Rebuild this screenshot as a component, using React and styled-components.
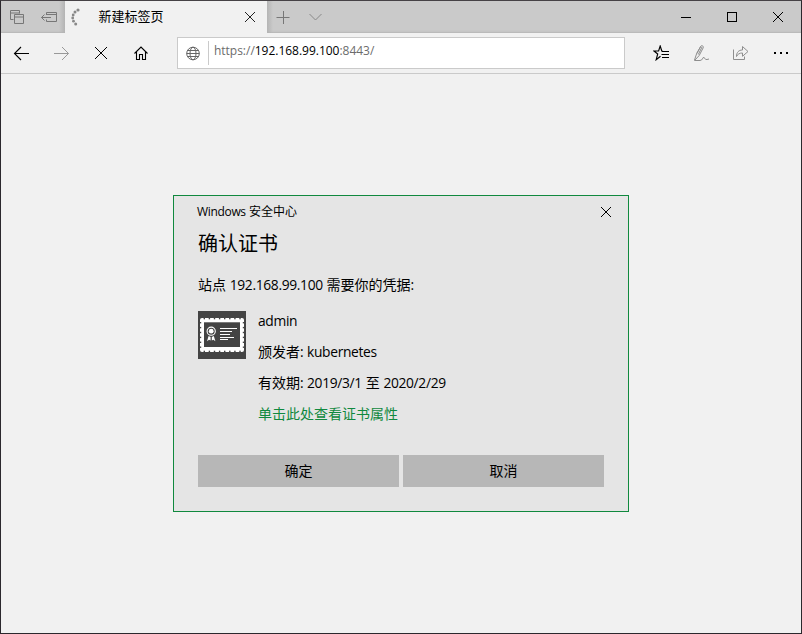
import React from "react";
import styled, { createGlobalStyle } from "styled-components";

const GlobalStyle = createGlobalStyle`
  * { box-sizing: border-box; }
  html, body { margin: 0; height: 100%; overflow: hidden; }
  body {
    font-family: "Open Sans", "Noto Sans CJK SC", sans-serif;
    color: #000;
    background: #f1f1f1;
  }
  svg { display: block; flex: none; }
`;

const Window = styled.div`
  width: 802px;
  height: 634px;
  display: flex;
  flex-direction: column;
  background: #f1f1f1;
  border: 1px solid #2b282d;
  border-top-color: #464246;
`;

const TitleBar = styled.header`
  height: 32px;
  flex: none;
  display: flex;
  background: #cacaca;
  box-shadow: inset 0 -2px 2px -1px #b5b5b5;
`;

const TabTools = styled.div`
  width: 64px;
  display: flex;
  background: linear-gradient(to right, transparent 58px, #b4b4b4);
`;

const IconButton = styled.button`
  width: ${(p) => p.$w}px;
  height: 100%;
  padding: 0;
  border: 0;
  background: none;
  display: flex;
  align-items: center;
  justify-content: center;
  flex: none;
  color: ${(p) => p.$color || "#000"};
`;

const Tab = styled.div`
  width: 202px;
  background: #f1f1f1;
  display: flex;
  align-items: center;
`;

const TabTitle = styled.span`
  width: 153px;
  padding-left: 17.5px;
  font-size: 13px;
  line-height: 30px;
  height: 32px;
`;

const TabActions = styled.div`
  flex: 1;
  display: flex;
  background: linear-gradient(to right, #b4b4b4, transparent 6px);
`;

const ToolBar = styled.nav`
  height: 41px;
  flex: none;
  display: flex;
  align-items: center;
  border-bottom: 1px solid #cacaca;
`;

const AddressBar = styled.div`
  width: 448px;
  height: 32px;
  margin: 0 16px;
  display: flex;
  align-items: center;
  background: #fff;
  border: 1px solid #cacaca;
`;

const Divider = styled.span`
  width: 1px;
  height: 24px;
  background: #cacaca;
`;

const Url = styled.span`
  padding-left: 5px;
  padding-bottom: 5px;
  font-size: 12px;
  line-height: 18px;
  letter-spacing: -0.02px;
  color: #6c6c6c;
  white-space: pre;
`;

const Host = styled.span`
  color: #000;
`;

const Page = styled.main`
  flex: 1;
  display: flex;
  align-items: center;
  justify-content: center;
`;

const Dialog = styled.section`
  width: 456px;
  height: 317px;
  border: 1px solid #10893e;
  background: #e5e5e5;
  display: flex;
  flex-direction: column;
  padding: 0 24px 24px;
`;

const DialogHeader = styled.div`
  height: 32px;
  display: flex;
  justify-content: space-between;
  margin: 0 -24px 0 -1px;
  font-size: 12px;
  line-height: 32px;
`;

const Heading = styled.h1`
  margin: 0;
  height: 30px;
  font-size: 20px;
  line-height: 31px;
  font-weight: 400;
`;

const Line = styled.p`
  margin: 0;
  height: 31px;
  font-size: 14px;
  line-height: 29px;
  white-space: pre;
`;

const Prompt = styled(Line)`
  margin: 12px 0 5px;
`;

const Latin = styled.span`
  font-size: ${(p) => p.$size || 13.8}px;
  letter-spacing: -0.33px;
  word-spacing: 0.5px;
`;

const Certificate = styled.div`
  display: flex;
  gap: 12px;
`;

const Badge = styled.div`
  width: 48px;
  height: 48px;
  margin-top: 5px;
`;

const Link = styled(Line).attrs({ as: "a" })`
  display: block;
  color: #10893e;
`;

const Actions = styled.footer`
  display: flex;
  gap: 4px;
  margin-top: auto;
`;

const ActionButton = styled.button`
  width: 201px;
  height: 32px;
  padding: 0 0 2px;
  border: 0;
  background: #b7b7b7;
  color: #000;
  font: 14px/30px "Noto Sans CJK SC", sans-serif;
`;

const Icon = ({ w = 16, h = 16, children }) => (
  <svg width={w} height={h} viewBox={`0 0 ${w} ${h}`} fill="none" stroke="currentColor">
    {children}
  </svg>
);

const Cross = ({ size = 10, weight = 1 }) => (
  <Icon w={size} h={size}>
    <path d={`M0 0L${size} ${size}M${size} 0L0 ${size}`} strokeWidth={weight} />
  </Icon>
);

const notches = (start, step, count) =>
  Array.from({ length: count }, (_, i) => start + i * step);

const CertificateIcon = () => (
  <svg width="48" height="48" viewBox="0 0 48 48">
    <rect width="48" height="48" fill="#444" />
    <rect x="2" y="7" width="44" height="34" rx="2" fill="#fff" />
    <rect x="6" y="11.3" width="36" height="24.7" fill="#444" />
    {notches(5.6, 5.1, 8).map((x) => (
      <g key={x} fill="#444">
        <rect x={x} y="7" width="1.4" height="1.3" />
        <rect x={x} y="39.7" width="1.4" height="1.3" />
      </g>
    ))}
    {notches(11, 4.9, 6).map((y) => (
      <g key={y} fill="#444">
        <rect x="2" y={y} width="1.2" height="1.4" />
        <rect x="44.8" y={y} width="1.2" height="1.4" />
      </g>
    ))}
    <circle cx="13.2" cy="20.2" r="4.1" fill="none" stroke="#fff" strokeWidth="1.1" />
    <circle cx="13.2" cy="20.2" r="2.4" fill="#fff" />
    <path d="M10.6 25L12.6 26V29.5L11 28.8L9 30.2ZM15.8 25L13.8 26V29.5L15.4 28.8L17.4 30.2Z" fill="#fff" />
    <path d="M22 17.5H39M22 20.5H34M22 23.5H32M22 26.5H36M22 28.5H30" stroke="#fff" />
  </svg>
);

export default function App() {
  return (
    <>
      <GlobalStyle />
      <Window>
        <TitleBar>
          <TabTools>
            <IconButton $w={32} $color="#777">
              <Icon>
                <path d="M4.5 10.5H1.5V1.5H10.5V4.5M1.5 4H10.5M5.5 5.5H14.5V14.5H5.5ZM5.5 8H14.5" />
              </Icon>
            </IconButton>
            <IconButton $w={32} $color="#777">
              <Icon>
                <path d="M5.5 6V3.5H15.5V12.5H5.5V10.5M5.5 5.5H15.5M0.5 8.5H10M3.5 5.5L0.5 8.5L3.5 11.5" />
              </Icon>
            </IconButton>
          </TabTools>
          <Tab>
            <Icon w={16} h={20}>
              <g fill="#888" stroke="none">
                <circle cx="13" cy="3" r="1.6" />
                <circle cx="10" cy="5" r="1.5" />
                <circle cx="8.2" cy="8" r="1.4" />
                <circle cx="7.7" cy="11" r="1.4" />
                <circle cx="8.5" cy="14.2" r="1.4" />
                <circle cx="10.7" cy="17" r="1.5" />
              </g>
            </Icon>
            <TabTitle>新建标签页</TabTitle>
            <IconButton $w={32} $color="#222">
              <Cross />
            </IconButton>
          </Tab>
          <TabActions>
            <IconButton $w={32} $color="#777">
              <Icon w={14} h={14}>
                <path d="M0.5 7.5H13.5M7.5 1V14" />
              </Icon>
            </IconButton>
            <IconButton $w={33} $color="#888">
              <Icon w={13} h={8}>
                <path d="M0.5 1L6.5 7L12.5 1" />
              </Icon>
            </IconButton>
          </TabActions>
          <IconButton $w={46}>
            <Icon w={10} h={10}>
              <path d="M0 5.5H10" />
            </Icon>
          </IconButton>
          <IconButton $w={46}>
            <Icon w={10} h={10}>
              <rect x="0.5" y="0.5" width="9" height="9" />
            </Icon>
          </IconButton>
          <IconButton $w={46}>
            <Cross />
          </IconButton>
        </TitleBar>

        <ToolBar>
          <IconButton $w={40}>
            <Icon>
              <path d="M1.5 8.5H16M8 2L1.5 8.5L8 15" strokeWidth="1.1" />
            </Icon>
          </IconButton>
          <IconButton $w={40} $color="#999">
            <Icon>
              <path d="M1 8.5H15.5M9 2L15.5 8.5L9 15" />
            </Icon>
          </IconButton>
          <IconButton $w={40}>
            <Cross size={12} />
          </IconButton>
          <IconButton $w={40}>
            <Icon>
              <path d="M1.5 8.5L8 2L14.5 8.5M3.5 6.5V14.5H6.5V9.5H9.5V14.5H12.5V6.5" strokeWidth="1.1" />
            </Icon>
          </IconButton>
          <AddressBar>
            <IconButton $w={30} $color="#666">
              <Icon>
                <circle cx="8" cy="8.5" r="6.3" />
                <ellipse cx="8" cy="8.5" rx="3" ry="6.3" />
                <path d="M2.5 5.5H13.5M1.5 8.5H14.5M2.5 11.5H13.5" />
              </Icon>
            </IconButton>
            <Divider />
            <Url>
              https://<Host>192.168.99.100</Host>:8443/
            </Url>
          </AddressBar>
          <IconButton $w={40}>
            <Icon w={17} h={16}>
              <path d="M10 6.5L8.8 6L7.2 1L5.6 6H1L4.7 9L3.2 14.7L7.5 11.2M9 6.5H16M8.5 9.5H16M9 12.5H16" strokeWidth="1.15" />
            </Icon>
          </IconButton>
          <IconButton $w={40} $color="#8e8e8e">
            <Icon w={17} h={18}>
              <path d="M1.5 16L3.5 10L7.8 2.2C8.5 1 11 2 10.2 3.8L6.2 11.5L1.5 16.5H7C10 16.5 9 13 11 13.5C12.5 14 11.5 16 14 15.5L16 15M7.7 2.5L3.7 9.5M9 3L5.3 10.5" />
            </Icon>
          </IconButton>
          <IconButton $w={40} $color="#8e8e8e">
            <Icon w={18} h={17}>
              <path d="M1.5 4.5V14.5H12.5V11.5M4.5 11.5C4.5 7.5 6.5 5 10.5 5V1.5L16 6.5L10.5 11.3V8C7.5 8 5.8 9 4.5 11.5Z" />
            </Icon>
          </IconButton>
          <IconButton $w={40}>
            <Icon w={16} h={4}>
              <path d="M1 2H3M7 2H9M13 2H15" strokeWidth="2" />
            </Icon>
          </IconButton>
        </ToolBar>

        <Page>
          <Dialog>
            <DialogHeader>
              <span>
                <Latin $size={12}>Windows </Latin>安全中心
              </span>
              <IconButton $w={44}>
                <Cross />
              </IconButton>
            </DialogHeader>
            <Heading>确认证书</Heading>
            <Prompt>
              站点<Latin> 192.168.99.100 </Latin>需要你的凭据<Latin>:</Latin>
            </Prompt>
            <Certificate>
              <Badge>
                <CertificateIcon />
              </Badge>
              <div>
                <Line>
                  <Latin>admin</Latin>
                </Line>
                <Line>
                  颁发者<Latin>: kubernetes</Latin>
                </Line>
                <Line>
                  有效期<Latin>: 2019/3/1 </Latin>至<Latin> 2020/2/29</Latin>
                </Line>
                <Link>单击此处查看证书属性</Link>
              </div>
            </Certificate>
            <Actions>
              <ActionButton>确定</ActionButton>
              <ActionButton>取消</ActionButton>
            </Actions>
          </Dialog>
        </Page>
      </Window>
    </>
  );
}
